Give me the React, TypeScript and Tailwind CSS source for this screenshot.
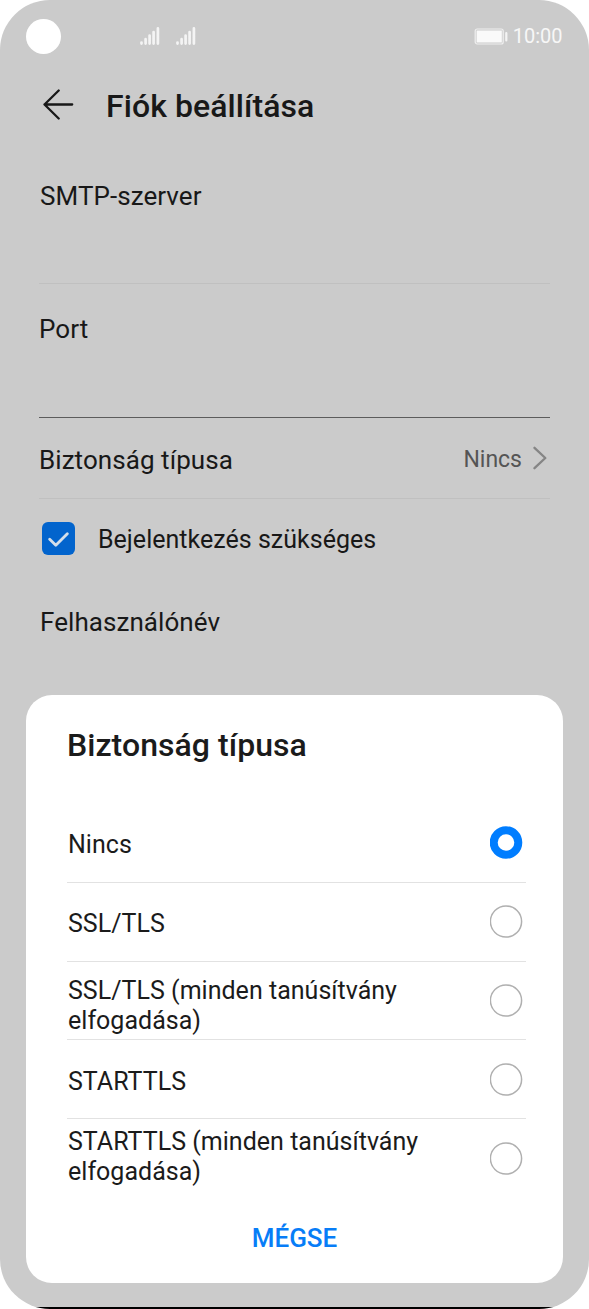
import React, { useState } from "react";
import clsx from "clsx";

const OPTIONS = [
  { label: "Nincs" },
  { label: "SSL/TLS" },
  { label: "SSL/TLS (minden tanúsítvány elfogadása)", className: "pt-[11px]" },
  { label: "STARTTLS" },
  { label: "STARTTLS (minden tanúsítvány elfogadása)", className: "pb-[3px]" },
];

function SignalIcon() {
  return (
    <svg width="20" height="18" viewBox="0 0 20 18" fill="none" stroke="#f4f4f4" strokeWidth="2.7" strokeLinecap="round">
      <path d="M1.5 15.6v1M5.6 12.2v4.4M9.6 8.6v8M13.6 5v11.6M17.9 1.4v15.2" />
    </svg>
  );
}

function BatteryIcon() {
  return (
    <svg width="34" height="17" viewBox="0 0 34 17">
      <rect x="1.2" y="1" width="28" height="15" rx="2" fill="none" stroke="#efefef" strokeWidth="1.2" />
      <rect x="2.6" y="2.5" width="25.2" height="12" fill="#fafafa" />
      <rect x="31.2" y="4" width="2.2" height="9.5" rx="1" fill="#f4f4f4" />
    </svg>
  );
}

function StatusBar() {
  return (
    <div className="flex h-[72px] items-center pl-[26px] pr-[26.5px]">
      <div className="size-[35px] shrink-0 rounded-full bg-white" />
      <div className="ml-[79px] flex gap-4">
        <SignalIcon />
        <SignalIcon />
      </div>
      <div className="ml-auto flex items-center gap-[5px]">
        <BatteryIcon />
        <span className="text-[20px] leading-6 text-[#f7f7f7]">10:00</span>
      </div>
    </div>
  );
}

function Radio({ checked }: { checked: boolean }) {
  return (
    <svg width="33" height="33" viewBox="0 0 33 33" fill="none" className="shrink-0">
      {checked ? (
        <circle cx="16" cy="16.5" r="12.3" stroke="#007dff" strokeWidth="8" />
      ) : (
        <circle cx="16" cy="16.5" r="15.6" stroke="#b0b0b0" strokeWidth="1.5" />
      )}
    </svg>
  );
}

interface RadioRowProps {
  label: string;
  className?: string;
  checked: boolean;
  last?: boolean;
  onSelect: () => void;
}

function RadioRow({ label, className = "pt-[5px]", checked, last, onSelect }: RadioRowProps) {
  return (
    <div
      onClick={onSelect}
      className={clsx(
        "flex h-[78.8px] cursor-pointer items-center justify-between border-b pr-[3px] pl-px",
        last ? "border-transparent" : "border-[#e2e2e2]"
      )}
    >
      <span className={clsx("w-[370px] text-[25px] leading-[30px] tracking-[0.02px]", className)}>{label}</span>
      <Radio checked={checked} />
    </div>
  );
}

function SecurityDialog() {
  const [selected, setSelected] = useState(0);

  return (
    <div className="absolute top-[695px] left-[26px] flex h-[588px] w-[537px] flex-col rounded-[26px] bg-white pr-[37px] pl-[41px] text-[#1b1b1b]">
      <h2 className="pt-8 text-[32px] leading-9 font-medium tracking-[0.05px]">Biztonság típusa</h2>
      <div className="mt-[41px]">
        {OPTIONS.map((option, i) => (
          <RadioRow
            key={option.label}
            label={option.label}
            className={option.className}
            checked={i === selected}
            last={i === OPTIONS.length - 1}
            onSelect={() => setSelected(i)}
          />
        ))}
      </div>
      <button className="mt-[25px] mr-1 self-center text-[26px] leading-[30px] font-medium text-[#077df7]">MÉGSE</button>
    </div>
  );
}

export default function App() {
  return (
    <div className="h-[1309px] w-[589px] overflow-hidden rounded-[50px] font-['Roboto',sans-serif]">
      <div className="relative h-[1307px] bg-[#cbcbcb] text-[#181818]">
        <StatusBar />

        <header className="flex h-[68px] items-center pl-[43px]">
          <svg width="31" height="31" viewBox="0 0 31 31" fill="none" stroke="#181818" strokeWidth="2.3" strokeLinecap="round" strokeLinejoin="round" className="mb-[3px]">
            <path d="M15.7 1.5L1.5 15.5l14.2 14M1.5 15.5h27.7" />
          </svg>
          <h1 className="mb-px ml-8 text-[32px] leading-9 font-medium tracking-[0.08px]">Fiók beállítása</h1>
        </header>

        <div className="mr-[39px] ml-[39px] text-[26px] leading-[30px] tracking-[0.06px]">
          <div className="h-[143.5px] border-b border-[#c0c0c0] pt-[41px] pl-px">SMTP-szerver</div>
          <div className="h-[134px] border-b border-[#5c5c5c] pt-[30px]">Port</div>
          <div className="flex h-[81.5px] items-center justify-between border-b border-[#c0c0c0] pt-[4px] pr-[3px]">
            <span>Biztonság típusa</span>
            <div className="flex items-center gap-[11px]">
              <span className="text-[23px] tracking-normal text-[#555555]">Nincs</span>
              <svg width="14" height="24" viewBox="0 0 14 24" fill="none" stroke="#858585" strokeWidth="2.3" strokeLinecap="round" strokeLinejoin="round" className="mb-[3px]">
                <path d="M1.5 1.8L12.3 12 1.5 22.2" />
              </svg>
            </div>
          </div>
          <div className="flex h-[79px] items-center pl-[3px]">
            <div className="flex size-[33px] items-center justify-center rounded-[6px] bg-[#0264cd]">
              <svg width="21" height="15" viewBox="0 0 21 15" fill="none" stroke="#d4dfea" strokeWidth="2.8" strokeLinecap="round" strokeLinejoin="round" className="mt-px">
                <path d="M1.7 7.3l6.1 6L19.3 1.8" />
              </svg>
            </div>
            <span className="mt-0.5 ml-[23px] text-[25px] tracking-[0.02px]">Bejelentkezés szükséges</span>
          </div>
          <div className="pt-[29px] pl-px">Felhasználónév</div>
        </div>

        <SecurityDialog />
      </div>
      <div className="h-0.5 bg-black" />
    </div>
  );
}
